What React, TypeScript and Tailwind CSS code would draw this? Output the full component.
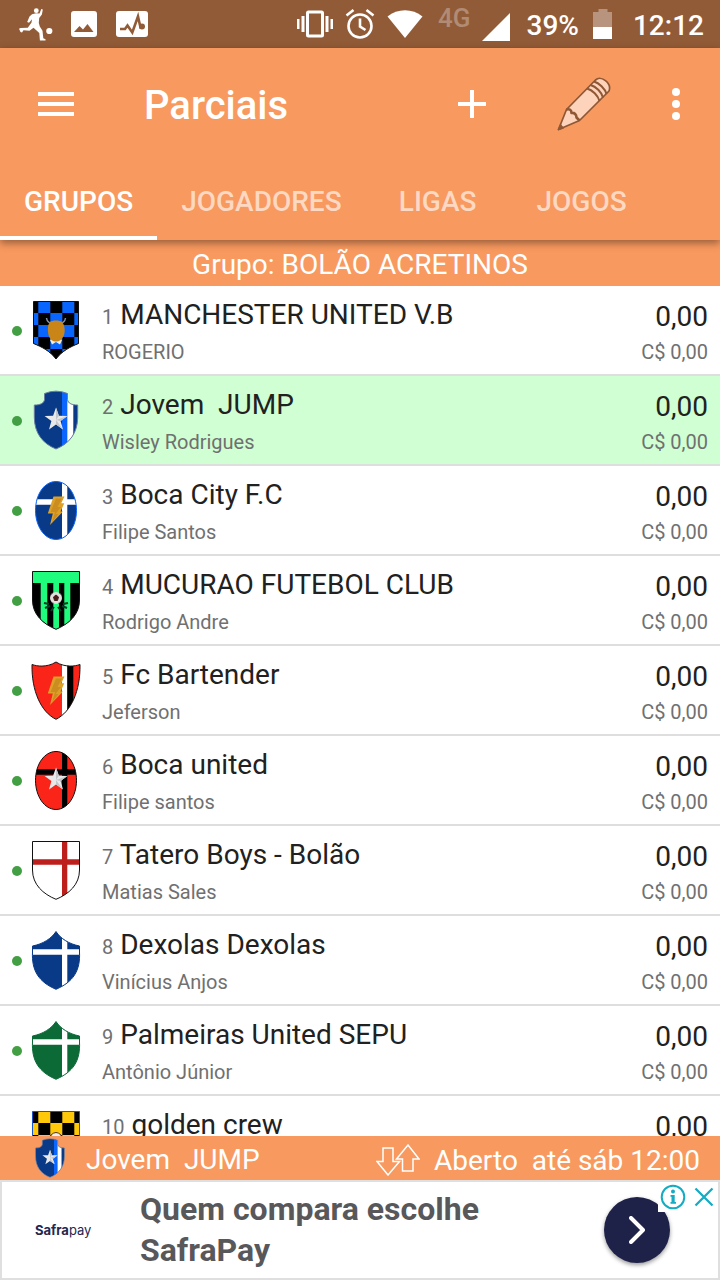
import React, { useId, useState } from 'react';

type CrestKind =
  | 'checkBlue'
  | 'jump'
  | 'ovalBlue'
  | 'mucurao'
  | 'bartender'
  | 'ovalRed'
  | 'cross'
  | 'dexolas'
  | 'palmeiras'
  | 'golden';

const OVAL = 'M30 1.5C41.5 1.5 50.5 14.2 50.5 30.3S41.5 59.5 30 59.5 9.5 46.4 9.5 30.3 18.5 1.5 30 1.5Z';
const SQUARE = 'M6.5 1.5H53.5V30C53.5 44.500 43 54 30 59.300 17 54 6.500 44.500 6.500 30Z';
const ARMOR = 'M30 1.500C34.500 8.500 43 14 53.500 16V22C54.500 41 47 52 30 59.300 13 52 5.500 41 6.500 22V16C17 14 25.500 8.500 30 1.500Z';
const WAVE = 'M30 2C34.500 5 40 6 44 6.100 48 6.100 51 5.500 54 4.500 54.500 31 45 52 30 59.300 15 52 5.500 31 6 4.500 9 5.500 12 6.100 16 6.100 20 6 25.500 5 30 2Z';
const NOTCH = 'M18.5 3.500Q30 -1.200 41.500 3.500V9.500C42 13.500 46 15 51.700 15V27C51.700 43 43.500 53.500 30 59 16.500 53.500 8.300 43 8.300 27V15C14 15 18 13.500 18.500 9.500Z';
const PENNANT = 'M7.500 1.500H52.500V43.500C44 47 36 51 30 59 24 51 16 47 7.500 43.500Z';

function Star() {
  return (
    <g>
      <path d="M30 17.500L32.900 25.700 41.400 26 34.600 31 37 39.500 30 34.600 23 39.500 25.400 31 18.600 26 27.100 25.700Z" fill="#e9e9ea" />
      <path d="M30 17.500V30L32.900 25.700ZM30 30L41.400 26 34.600 31ZM30 30L37 39.500 30 34.600Z" fill="#c3c6ca" />
    </g>
  );
}

function Bolt() {
  return (
    <g>
      <path d="M27.500 16.500H38.500L35.200 23.200H38.300L34.500 31.500H37L24 45 26.800 33.500H21.800Z" fill="#dda127" />
      <path d="M30 18.500H36L31.500 27H35L29.500 34H32.500L26 42.500 29 32H24.500Z" fill="#cc8d20" />
    </g>
  );
}

function Cross({ color }: { color: string }) {
  return <path d="M0 19.300H36V0H41.300V19.300H60V24.800H41.300V60H36V24.800H0Z" fill={color} />;
}

function Checks({ color }: { color: string }) {
  const cells: React.ReactElement[] = [];
  for (let r = 0; r < 5; r++) {
    for (let c = 0; c < 5; c++) {
      if ((r + c) % 2 === 1) {
        cells.push(<rect key={`${r}-${c}`} x={0.3 + c * 12} y={1 + r * 12} width="12" height="12" fill={color} />);
      }
    }
  }
  return <g>{cells}</g>;
}

const crests: Record<CrestKind, { shape: string; base: string; outline: string; art: React.ReactElement }> = {
  checkBlue: {
    shape: PENNANT,
    base: '#000',
    outline: '#111',
    art: (
      <g>
        <Checks color="#0866ff" />
        <path d="M24 40L30 35 36 40 34 44.500 30 42 26 44.500Z" fill="#f1eee6" />
        <path d="M20.500 18C21 22 23.500 23.500 27 22.500M39.500 18C39 22 36.500 23.500 33 22.500" fill="none" stroke="#8292a5" strokeWidth="1.500" />
        <path d="M24 22C26 20 34 20 36 22 38.500 25 39.500 30 38 35 36 40 33 41.500 30 41.500S24 40 22.500 35C21.500 30 21.500 25 24 22Z" fill="#c98518" />
      </g>
    ),
  },
  jump: {
    shape: NOTCH,
    base: '#083a87',
    outline: '#6b7ea0',
    art: (
      <g>
        <rect x="36" width="5.300" height="60" fill="#0b66ff" />
        <rect x="41.300" width="6" height="60" fill="#fff" />
        <Star />
      </g>
    ),
  },
  ovalBlue: { shape: OVAL, base: '#083a87', outline: '#0b66ff', art: <g><Cross color="#fff" /><Bolt /></g> },
  mucurao: {
    shape: SQUARE,
    base: '#000',
    outline: '#111',
    art: (
      <g>
        <path d="M0 0H60V13H44.300V60H38.300V13H33V60H27.300V13H21.300V60H14.700V13H0Z" fill="#1ffc7d" />
        <path d="M18 33L23 34M19 38L24 36M25 41L28 37M42 33L37 34M41 38L36 36M35 41L32 37" stroke="#063e25" strokeWidth="2" />
        <circle cx="30" cy="28" r="6" fill="#e3dfdc" />
        <path d="M27.500 27L30 25 32.500 27 31.500 30.500H28.500Z" fill="#481c1a" stroke="#481c1a" />
        <path d="M24.500 25L27 23M35.500 25L33 23M26 32.500L28 33.500M34 32.500L32 33.500" stroke="#777" />
      </g>
    ),
  },
  bartender: {
    shape: WAVE,
    base: '#fb2418',
    outline: '#161616',
    art: (
      <g>
        <rect x="36" width="5.300" height="60" fill="#fff" />
        <rect x="41.300" width="6" height="60" fill="#000" />
        <Bolt />
      </g>
    ),
  },
  ovalRed: { shape: OVAL, base: '#fb2418', outline: '#111', art: <g><Cross color="#000" /><Star /></g> },
  cross: { shape: SQUARE, base: '#fff', outline: '#111', art: <Cross color="#bd1f1d" /> },
  dexolas: { shape: ARMOR, base: '#083a87', outline: '#083a87', art: <Cross color="#fff" /> },
  palmeiras: { shape: ARMOR, base: '#0c6a37', outline: '#0c6a37', art: <Cross color="#fff" /> },
  golden: {
    shape: SQUARE,
    base: '#000',
    outline: '#1457c4',
    art: (
      <g>
        <Checks color="#ffc90a" />
        <path d="M25 25Q30 20 35 25V34H25Z" fill="#eee" stroke="#4c3526" />
      </g>
    ),
  },
};

function Crest({ kind, className }: { kind: CrestKind; className: string }) {
  const id = useId();
  const c = crests[kind];
  return (
    <svg viewBox="0 0 60 60" className={className} aria-hidden="true">
      <clipPath id={id}>
        <path d={c.shape} />
      </clipPath>
      <g clipPath={`url(#${id})`}>
        <rect width="60" height="60" fill={c.base} />
        {c.art}
      </g>
      <path d={c.shape} fill="none" stroke={c.outline} strokeWidth="1" />
    </svg>
  );
}

const teams: { name: string; owner: string; crest: CrestKind }[] = [
  { name: 'MANCHESTER UNITED V.B', owner: 'ROGERIO', crest: 'checkBlue' },
  { name: 'Jovem  JUMP', owner: 'Wisley Rodrigues', crest: 'jump' },
  { name: 'Boca City F.C', owner: 'Filipe Santos', crest: 'ovalBlue' },
  { name: 'MUCURAO FUTEBOL CLUB', owner: 'Rodrigo Andre', crest: 'mucurao' },
  { name: 'Fc Bartender', owner: 'Jeferson', crest: 'bartender' },
  { name: 'Boca united', owner: 'Filipe santos', crest: 'ovalRed' },
  { name: 'Tatero Boys - Bolão', owner: 'Matias Sales', crest: 'cross' },
  { name: 'Dexolas Dexolas', owner: 'Vinícius Anjos', crest: 'dexolas' },
  { name: 'Palmeiras United SEPU', owner: 'Antônio Júnior', crest: 'palmeiras' },
  { name: 'golden crew', owner: '', crest: 'golden' },
];

function StatusBar() {
  return (
    <div className="flex h-12 shrink-0 items-center bg-[#925b37] pr-4 pl-[18px] text-white">
      <svg viewBox="0 0 36 36" className="h-9 w-9" fill="#fff">
        <circle cx="18.300" cy="4.700" r="2.400" />
        <path d="M14 8.300L18 7.300 21.500 7.500 23.300 3 24.800 3.500 23.900 8.500 21.200 12 20.800 17 21.800 20.500 24.500 24.800 25.300 32.300 27.500 33.300V34.600H21.900L21.300 27 15.500 21.800 11.500 24.800 5.500 24.300 4 26.500 2.500 26 1 22.800 2.500 21.900 9.800 21.800 13.500 16.500 14 13.300 11 16.800 9.200 16 11.500 10.500Z" />
        <circle cx="31.300" cy="25" r="3.100" />
      </svg>
      <svg viewBox="0 0 26 26" className="ml-[17px] h-[26px] w-[26px]">
        <rect width="26" height="26" rx="3" fill="#fff" />
        <path d="M3 21L8.500 15 12 18.500 16.500 13 22.500 21Z" fill="#925b37" />
      </svg>
      <svg viewBox="0 0 32 26" className="ml-[19px] h-[26px] w-8">
        <rect width="32" height="26" rx="3" fill="#fff" />
        <path d="M4 18H9L11.500 14.500 16.300 21.500 22 5.500 24.500 16.500H27" fill="none" stroke="#925b37" strokeWidth="2.600" />
        <circle cx="26" cy="15.500" r="3" fill="#925b37" />
      </svg>
      <div className="ml-auto flex items-center">
        <svg viewBox="0 0 38 30" className="h-[30px] w-[38px]" fill="#fff">
          <rect x="11.500" y="3" width="15" height="24" rx="1" fill="none" stroke="#fff" strokeWidth="3" />
          <path d="M1 10H3.500V20H1ZM5.500 7H8.500V23H5.500ZM29.500 7H32.500V23H29.500ZM34.500 10H37V20H34.500Z" />
        </svg>
        <svg viewBox="0 0 30 32" className="ml-[11px] h-8 w-[30px]" fill="none" stroke="#fff" strokeWidth="2.600">
          <circle cx="15" cy="18" r="11.500" />
          <path d="M15 10.500V18.500L20.500 22M1.500 7.500L8.500 2M28.500 7.500L21.500 2" />
        </svg>
        <svg viewBox="0 0 36 28" className="ml-3 h-7 w-9">
          <path d="M0.500 6.500C10.500 -2 25.500 -2 35.500 6.500L18 28Z" fill="#fff" />
        </svg>
        <span className="mb-3 ml-[15px] text-[26px] leading-8 font-medium text-[#b18b74]">4G</span>
        <svg viewBox="0 0 28 28" className="mt-1.5 ml-[11px] h-7 w-7">
          <path d="M28 0V28H0Z" fill="#fff" />
        </svg>
        <span className="mt-1 ml-[17px] text-[28px] leading-9 font-medium">39%</span>
        <svg viewBox="0 0 20 30" className="ml-3.5 h-[30px] w-5">
          <path d="M5.500 0H14.500V3H19V18H0V3H5.500Z" fill="#b8937d" />
          <rect y="18" width="19" height="12" fill="#fff" />
        </svg>
        <span className="mt-1 ml-5 text-[28px] leading-9 font-medium">12:12</span>
      </div>
    </div>
  );
}

const tabs = ['GRUPOS', 'JOGADORES', 'LIGAS', 'JOGOS'];

export default function App() {
  const [active, setActive] = useState('GRUPOS');
  return (
    <div className="flex h-screen flex-col overflow-hidden bg-white font-[Roboto,sans-serif] text-[#212121]">
      <StatusBar />
      <header className="relative z-10 shrink-0 bg-[#f8995f] text-white shadow-[0_3px_8px_rgba(0,0,0,0.4)]">
        <div className="flex h-28 items-center pr-6 pl-8">
          <button aria-label="Menu" className="flex h-12 w-12 items-center justify-center">
            <svg viewBox="0 0 36 24" className="h-6 w-9" fill="#fff">
              <path d="M0 0H36V4H0ZM0 10H36V14H0ZM0 20H36V24H0Z" />
            </svg>
          </button>
          <h1 className="mt-1 ml-16 text-[40px] leading-[52px] font-medium">Parciais</h1>
          <button aria-label="Adicionar" className="ml-auto flex h-12 w-12 items-center justify-center">
            <svg viewBox="0 0 28 28" className="h-7 w-7">
              <path d="M14 0V28M0 14H28" stroke="#fff" strokeWidth="4" />
            </svg>
          </button>
          <button aria-label="Editar" className="ml-[60px] flex h-14 w-14 items-center justify-center">
            <svg viewBox="0 0 56 56" className="h-14 w-14" fill="#fdd3bc" stroke="#8f5734" strokeWidth="1.700" strokeLinejoin="round">
              <path d="M2.500 53.500L10.500 33.500 39.500 4C45 -1 56 7 53 15L23.500 44.500Z" />
              <path d="M10.500 33.500C13.500 32.500 15.500 34 15.500 37 18.500 36.500 20.500 38.500 20.500 41.500L23.500 44.500" fill="none" strokeWidth="2.600" />
              <path d="M38 5.500C43 7 49 12.500 50.500 18M34.500 9C40 10.500 45.500 16 47 21.500M31 12.500C36.500 14 42 19.500 43.500 25" fill="none" strokeWidth="2" />
              <path d="M2.500 53.500L4.500 49 7 52Z" fill="#8f5734" />
            </svg>
          </button>
          <button aria-label="Mais opções" className="ml-11 flex h-12 w-10 items-center justify-center">
            <svg viewBox="0 0 8 32" className="h-8 w-2" fill="#fff">
              <circle cx="4" cy="4" r="4" />
              <circle cx="4" cy="16" r="4" />
              <circle cx="4" cy="28" r="4" />
            </svg>
          </button>
        </div>
        <div role="tablist" className="flex h-20">
          {tabs.map((t) => (
            <button
              key={t}
              role="tab"
              aria-selected={active === t}
              onClick={() => setActive(t)}
              className={
                active === t
                  ? 'min-w-36 border-b-4 border-white px-6 pt-2 text-[28px] font-medium text-white'
                  : 'min-w-36 border-b-4 border-transparent px-6 pt-2 text-[28px] font-medium text-[#fdd8c2]'
              }
            >
              {t}
            </button>
          ))}
        </div>
      </header>
      <h2 className="shrink-0 bg-[#f8995f] pt-[5px] pb-px text-center text-[28px] leading-10 text-white">Grupo: BOLÃO ACRETINOS</h2>
      <ul className="min-h-0 flex-1 overflow-y-auto [scrollbar-width:none]">
        {teams.map((t, i) => (
          <li
            key={t.name}
            className={
              i === 1
                ? 'flex h-[90px] items-start border-b-2 border-[#dedede] bg-[#cfffd2] px-3'
                : 'flex h-[90px] items-start border-b-2 border-[#dedede] bg-white px-3'
            }
          >
            <span className="mt-10 h-2.5 w-2.5 rounded-full bg-[#439f43]" />
            <Crest kind={t.crest} className="mt-3.5 ml-1 h-[60px] w-[60px]" />
            <div className="ml-4 flex-1 pt-[11px]">
              <p className="text-[28px] leading-9 whitespace-pre">
                <span className="text-xl leading-7 text-[#707070]">{i + 1}</span> {t.name}
              </p>
              <p className="mt-[5px] text-xl leading-7 text-[#707070]">{t.owner}</p>
            </div>
            <div className="pt-[13px] text-right">
              <p className="text-[28px] leading-9">0,00</p>
              <p className="mt-[3px] text-xl leading-7 text-[#707070]">C$ 0,00</p>
            </div>
          </li>
        ))}
      </ul>
      <div className="flex h-11 shrink-0 items-center bg-[#f8995f] pr-5 pl-[30px] text-[28px] leading-9 text-white">
        <Crest kind="jump" className="h-10 w-10" />
        <span className="mt-1 ml-4 whitespace-pre">Jovem  JUMP</span>
        <svg viewBox="0 0 44 32" className="mt-1 ml-auto h-8 w-11" fill="#f8995f" stroke="#fff" strokeWidth="1.500">
          <path d="M7 4H17V17.500H23.500L12 31 1 17.500H7Z" />
          <path d="M26.500 27V15H20.500L32 1 43 15H37V27Z" />
        </svg>
        <span className="mt-1.5 ml-3.5 whitespace-pre">Aberto  até sáb 12:00</span>
      </div>
      <aside className="relative flex h-[100px] shrink-0 items-center border-2 border-[#dfdfdf] bg-white pr-12 pl-[33px]">
        <span className="w-[105px] shrink-0 font-[Inter,sans-serif] text-[13px] leading-5 text-[#252650]">
          <b>Safra</b>pay
        </span>
        <p className="max-w-[400px] flex-1 text-[32px] leading-[41px] font-bold text-[#58585a]">
          Quem compara escolhe SafraPay
        </p>
        <button aria-label="Abrir anúncio" className="ml-auto flex h-[66px] w-[66px] items-center justify-center rounded-full bg-[#1e2148] shadow-[0_2px_4px_rgba(0,0,0,0.4)]">
          <svg viewBox="0 0 16 28" className="h-7 w-4">
            <path d="M2 2L14 14 2 26" fill="none" stroke="#fff" strokeWidth="4" strokeLinecap="round" strokeLinejoin="round" />
          </svg>
        </button>
        <div className="absolute top-0 right-0 flex h-[30px] items-center gap-2 bg-white pr-1 pl-0.5">
          <button aria-label="Sobre este anúncio">
            <svg viewBox="0 0 26 26" className="h-[26px] w-[26px]">
              <circle cx="13" cy="13" r="11.300" fill="none" stroke="#15abc3" strokeWidth="2" />
              <circle cx="13" cy="7.500" r="2" fill="#15abc3" />
              <path d="M10.500 11H14.700V18H16V19.800H10.500V18H11.500V12.800H10.500Z" fill="#15abc3" />
            </svg>
          </button>
          <button aria-label="Fechar anúncio">
            <svg viewBox="0 0 20 20" className="h-5 w-5">
              <path d="M1.500 1.500L18.500 18.500M18.500 1.500L1.500 18.500" stroke="#15abc3" strokeWidth="2.300" />
            </svg>
          </button>
        </div>
      </aside>
    </div>
  );
}
